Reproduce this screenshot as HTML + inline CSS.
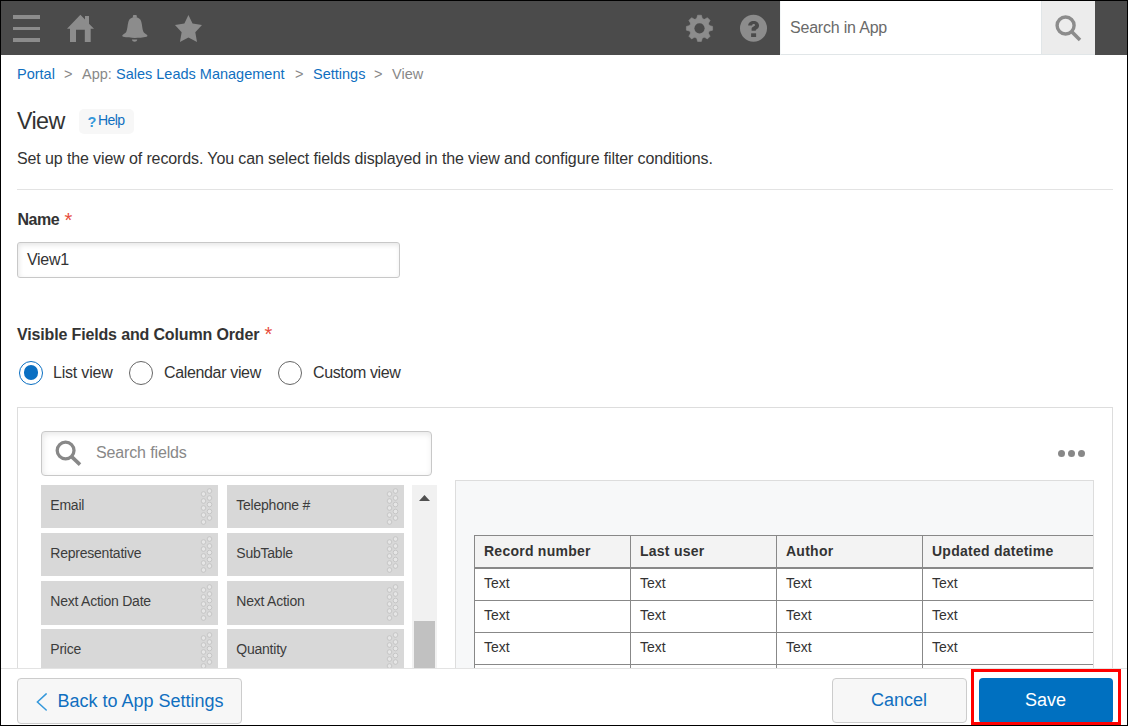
<!DOCTYPE html>
<html><head><meta charset="utf-8">
<style>
*{box-sizing:border-box;margin:0;padding:0}
html,body{width:1128px;height:726px;overflow:hidden;background:#fff;font-family:"Liberation Sans",sans-serif;color:#333}
.frame{position:absolute;left:0;top:0;width:1128px;height:726px;border:1px solid #000;pointer-events:none;z-index:100}
.abs{position:absolute}
.hdr{position:absolute;left:0;top:0;width:1128px;height:55px;background:#4b4b4b}
.t{position:absolute;white-space:nowrap;line-height:1}
.link{color:#106fc0}
.tile{position:absolute;width:177px;height:43px;background:#d8d8d8;overflow:hidden}
.tile span{position:absolute;left:9.3px;top:12.7px;font-size:14px;letter-spacing:-0.23px;color:#3c3c3c;white-space:nowrap;line-height:1}
.pv th,.pv td{border:1px solid #888;text-align:left;font-size:14px;padding:0 9px;height:32px;line-height:1;white-space:nowrap}
.pv tr.r1 td{height:33px}
.pv th{background:#f3f3f3;font-weight:bold;color:#333;border-bottom:2px solid #888;height:32px;letter-spacing:0.25px;padding-bottom:1px}
.pv td{color:#333;font-weight:normal;padding-bottom:3px}
</style></head><body>
<div class="hdr"></div>
<!-- hamburger -->
<div class="abs" style="left:13px;top:15px;width:27px;height:3.6px;background:#8c8c8c"></div>
<div class="abs" style="left:13px;top:26.8px;width:27px;height:3.6px;background:#8c8c8c"></div>
<div class="abs" style="left:13px;top:38.2px;width:27px;height:3.6px;background:#8c8c8c"></div>
<!-- home -->
<svg class="abs" style="left:0;top:0" width="1128" height="55">
 <g fill="#8c8c8c">
  <path d="M67 28.8 L80.4 14.8 L85 19.6 L85 16 L89 16 L89 23.8 L94 28.8 L90.7 28.8 L90.7 42 L84.8 42 L84.8 29.7 L76 29.7 L76 42 L70 42 L70 28.8 Z"/>
  <!-- bell -->
  <g transform="translate(117 10)">
  <path d="M15.9 7.8 L15.9 6 Q15.9 5 16.9 5 L18.8 5 Q19.8 5 19.8 6 L19.8 7.8 Z"/>
  <path d="M17.85 7.3 C21.5 7.3 23.6 9.0 24.3 11.8 C25.3 15.5 25.2 19.5 26.5 22 C27.5 23.5 29.5 24.2 30.3 25.3 C30.6 26 30.2 26.6 29.5 26.8 C26 27.7 21.5 27.9 17.85 27.9 C14.2 27.9 9.7 27.7 6.2 26.8 C5.5 26.6 5.1 26 5.4 25.3 C6.2 24.2 8.2 23.5 9.2 22 C10.5 19.5 10.4 15.5 11.4 11.8 C12.1 9 14.2 7.3 17.85 7.3 Z"/>
  <path d="M14.9 29.6 L20.3 29.6 C20 31 19 31.8 17.6 31.8 C16.2 31.8 15.2 31 14.9 29.6 Z"/>
  </g>
  <!-- star -->
  <path d="M188.44 14.96 L192.56 23.39 L201.98 25.12 L195.29 32.31 L197.02 41.98 L188.44 37.5 L179.92 41.98 L181.65 32.31 L174.96 25.12 L184.38 23.39 Z"/>
 </g>
</svg>
<!-- gear -->
<svg class="abs" style="left:685px;top:14px" width="29" height="29" viewBox="0 0 29 29">
 <g fill="#8c8c8c" stroke="#8c8c8c" stroke-width="0.6" stroke-linejoin="round" transform="translate(14.5 14.3)">
  <circle r="10.1"/>
  <path d="M-3 -9 L-1.9 -13.1 L1.9 -13.1 L3 -9 Z" transform="rotate(0)"/><path d="M-3 -9 L-1.9 -13.1 L1.9 -13.1 L3 -9 Z" transform="rotate(45)"/><path d="M-3 -9 L-1.9 -13.1 L1.9 -13.1 L3 -9 Z" transform="rotate(90)"/><path d="M-3 -9 L-1.9 -13.1 L1.9 -13.1 L3 -9 Z" transform="rotate(135)"/><path d="M-3 -9 L-1.9 -13.1 L1.9 -13.1 L3 -9 Z" transform="rotate(180)"/><path d="M-3 -9 L-1.9 -13.1 L1.9 -13.1 L3 -9 Z" transform="rotate(225)"/><path d="M-3 -9 L-1.9 -13.1 L1.9 -13.1 L3 -9 Z" transform="rotate(270)"/><path d="M-3 -9 L-1.9 -13.1 L1.9 -13.1 L3 -9 Z" transform="rotate(315)"/>
 </g>
 <circle cx="14.5" cy="14.3" r="5.1" fill="#4b4b4b"/>
</svg>
<!-- help circle -->
<svg class="abs" style="left:736px;top:11px" width="36" height="36" viewBox="0 0 36 36">
 <circle cx="17.5" cy="17.25" r="13.5" fill="#8c8c8c"/>
 <path fill="#4b4b4b" d="M12.15 14.6 C12.15 11.6 14.6 9.9 17.6 9.9 C20.7 9.9 23.05 11.8 23.05 14.6 C23.05 17.0 21.5 18.0 19.8 18.9 L19.8 19.8 L15.6 19.8 L15.6 17.8 C15.6 16.5 16.4 15.9 17.6 15.4 C18.7 14.9 19.1 14.6 19.1 14.1 C19.1 13.4 18.5 13 17.6 13 C16.7 13 16.1 13.6 16.1 14.6 Z"/>
 <rect x="15.1" y="22.3" width="5" height="3.7" fill="#4b4b4b"/>
</svg>
<!-- header search -->
<div class="abs" style="left:780px;top:1px;width:261px;height:54px;background:#fff;border-bottom:1px solid #e1e6e8;border-left:1px solid #f3f6f7"></div>
<div class="t" style="left:790px;top:20px;font-size:16px;letter-spacing:-0.2px;color:#6a6a6a">Search in App</div>
<div class="abs" style="left:1041px;top:1px;width:54px;height:54px;background:#ececec;border-bottom:1px solid #e1e6e8;border-left:1px solid #e1e6e8"></div>
<svg class="abs" style="left:1041px;top:1px" width="54" height="54">
 <circle cx="24.6" cy="24.5" r="8.5" fill="none" stroke="#8c8c8c" stroke-width="3.4"/>
 <line x1="30.8" y1="30.8" x2="39" y2="39" stroke="#8c8c8c" stroke-width="3.6"/>
</svg>

<!-- breadcrumb -->
<div class="t link" style="left:17px;top:67px;font-size:14.5px">Portal</div>
<div class="t" style="left:64px;top:67px;font-size:14.5px;color:#888">&gt;</div>
<div class="t" style="left:82px;top:67px;font-size:14.5px;color:#888">App:</div>
<div class="t link" style="left:116px;top:67px;font-size:14.5px">Sales Leads Management</div>
<div class="t" style="left:295px;top:67px;font-size:14.5px;color:#888">&gt;</div>
<div class="t link" style="left:313px;top:67px;font-size:14.5px">Settings</div>
<div class="t" style="left:374px;top:67px;font-size:14.5px;color:#888">&gt;</div>
<div class="t" style="left:392px;top:67px;font-size:14.5px;color:#888">View</div>
<!-- title -->
<div class="t" style="left:17px;top:110px;font-size:23.3px;letter-spacing:-0.6px;color:#333">View</div>
<div class="abs" style="left:79px;top:109px;width:55px;height:25px;background:#f7f7f7;border-radius:5px"></div>
<div class="t" style="left:87.5px;top:115px;font-size:14.5px;font-weight:bold;color:#3498db">?</div>
<div class="t" style="left:98px;top:113px;font-size:14px;letter-spacing:-0.55px;color:#106fc0">Help</div>

<div class="t" style="left:17px;top:151px;font-size:16px;letter-spacing:-0.117px;color:#333">Set up the view of records. You can select fields displayed in the view and configure filter conditions.</div>
<div class="abs" style="left:17px;top:189px;width:1096px;height:1px;background:#e3e3e3"></div>

<div class="t" style="left:17.5px;top:212px;font-size:16px;letter-spacing:-0.45px;font-weight:bold;color:#333">Name</div>
<div class="t" style="left:64.5px;top:210px;font-size:20px;color:#e74c3c">*</div>
<div class="abs" style="left:17px;top:242px;width:383px;height:36px;border:1px solid #c8c8c8;border-radius:3px;box-shadow:inset 1px 2px 5px rgba(0,0,0,.10)"></div>
<div class="t" style="left:27px;top:251.5px;font-size:16px;letter-spacing:-0.3px;color:#333">View1</div>

<div class="t" style="left:17px;top:327px;font-size:16px;letter-spacing:-0.15px;font-weight:bold;color:#333">Visible Fields and Column Order</div>
<div class="t" style="left:264.5px;top:324px;font-size:20px;color:#e74c3c">*</div>

<!-- radios -->
<div class="abs" style="left:19px;top:360.5px;width:24px;height:24px;border:1.7px solid #0a6fc2;border-radius:50%"></div>
<div class="abs" style="left:23.8px;top:365.2px;width:14.5px;height:14.5px;background:#0a6fc2;border-radius:50%"></div>
<div class="t" style="left:53px;top:364.5px;font-size:16px;letter-spacing:-0.2px;color:#333">List view</div>
<div class="abs" style="left:129px;top:360.5px;width:24px;height:24px;border:1px solid #666;border-radius:50%"></div>
<div class="t" style="left:164px;top:364.5px;font-size:16px;letter-spacing:-0.35px;color:#333">Calendar view</div>
<div class="abs" style="left:278px;top:360.5px;width:24px;height:24px;border:1px solid #666;border-radius:50%"></div>
<div class="t" style="left:313px;top:364.5px;font-size:16px;letter-spacing:-0.37px;color:#333">Custom view</div>

<!-- panel -->
<div class="abs" style="left:17px;top:407px;width:1096px;height:330px;border:1px solid #ddd"></div>
<!-- field search -->
<div class="abs" style="left:41px;top:431px;width:391px;height:45px;border:1px solid #c8c8c8;border-radius:4px;box-shadow:inset 1px 2px 6px rgba(0,0,0,.10)"></div>
<svg class="abs" style="left:41px;top:431px" width="60" height="45">
 <circle cx="24.6" cy="19.5" r="8.4" fill="none" stroke="#888" stroke-width="3.3"/>
 <line x1="30.6" y1="25.6" x2="39" y2="33.6" stroke="#888" stroke-width="3.6"/>
</svg>
<div class="t" style="left:96px;top:444.5px;font-size:16px;letter-spacing:-0.14px;color:#888">Search fields</div>
<!-- tiles -->
<div class="tile" style="left:41px;top:485px"><span>Email</span><svg width="177" height="43" style="position:absolute;left:0;top:0"><g fill="#e6e6e6" stroke="#bcbcbc" stroke-width="0.7"><circle cx="162.5" cy="9" r="2.3"/><circle cx="162.5" cy="16" r="2.3"/><circle cx="162.5" cy="23" r="2.3"/><circle cx="162.5" cy="30" r="2.3"/><circle cx="162.5" cy="37" r="2.3"/><circle cx="168.5" cy="6" r="2.3"/><circle cx="168.5" cy="13" r="2.3"/><circle cx="168.5" cy="19.5" r="2.3"/><circle cx="168.5" cy="26.5" r="2.3"/><circle cx="168.5" cy="33" r="2.3"/></g></svg></div>
<div class="tile" style="left:227px;top:485px"><span>Telephone #</span><svg width="177" height="43" style="position:absolute;left:0;top:0"><g fill="#e6e6e6" stroke="#bcbcbc" stroke-width="0.7"><circle cx="162.5" cy="9" r="2.3"/><circle cx="162.5" cy="16" r="2.3"/><circle cx="162.5" cy="23" r="2.3"/><circle cx="162.5" cy="30" r="2.3"/><circle cx="162.5" cy="37" r="2.3"/><circle cx="168.5" cy="6" r="2.3"/><circle cx="168.5" cy="13" r="2.3"/><circle cx="168.5" cy="19.5" r="2.3"/><circle cx="168.5" cy="26.5" r="2.3"/><circle cx="168.5" cy="33" r="2.3"/></g></svg></div>
<div class="tile" style="left:41px;top:533px"><span>Representative</span><svg width="177" height="43" style="position:absolute;left:0;top:0"><g fill="#e6e6e6" stroke="#bcbcbc" stroke-width="0.7"><circle cx="162.5" cy="9" r="2.3"/><circle cx="162.5" cy="16" r="2.3"/><circle cx="162.5" cy="23" r="2.3"/><circle cx="162.5" cy="30" r="2.3"/><circle cx="162.5" cy="37" r="2.3"/><circle cx="168.5" cy="6" r="2.3"/><circle cx="168.5" cy="13" r="2.3"/><circle cx="168.5" cy="19.5" r="2.3"/><circle cx="168.5" cy="26.5" r="2.3"/><circle cx="168.5" cy="33" r="2.3"/></g></svg></div>
<div class="tile" style="left:227px;top:533px"><span>SubTable</span><svg width="177" height="43" style="position:absolute;left:0;top:0"><g fill="#e6e6e6" stroke="#bcbcbc" stroke-width="0.7"><circle cx="162.5" cy="9" r="2.3"/><circle cx="162.5" cy="16" r="2.3"/><circle cx="162.5" cy="23" r="2.3"/><circle cx="162.5" cy="30" r="2.3"/><circle cx="162.5" cy="37" r="2.3"/><circle cx="168.5" cy="6" r="2.3"/><circle cx="168.5" cy="13" r="2.3"/><circle cx="168.5" cy="19.5" r="2.3"/><circle cx="168.5" cy="26.5" r="2.3"/><circle cx="168.5" cy="33" r="2.3"/></g></svg></div>
<div class="tile" style="left:41px;top:581px;height:44px"><span>Next Action Date</span><svg width="177" height="43" style="position:absolute;left:0;top:0"><g fill="#e6e6e6" stroke="#bcbcbc" stroke-width="0.7"><circle cx="162.5" cy="9" r="2.3"/><circle cx="162.5" cy="16" r="2.3"/><circle cx="162.5" cy="23" r="2.3"/><circle cx="162.5" cy="30" r="2.3"/><circle cx="162.5" cy="37" r="2.3"/><circle cx="168.5" cy="6" r="2.3"/><circle cx="168.5" cy="13" r="2.3"/><circle cx="168.5" cy="19.5" r="2.3"/><circle cx="168.5" cy="26.5" r="2.3"/><circle cx="168.5" cy="33" r="2.3"/></g></svg></div>
<div class="tile" style="left:227px;top:581px;height:44px"><span>Next Action</span><svg width="177" height="43" style="position:absolute;left:0;top:0"><g fill="#e6e6e6" stroke="#bcbcbc" stroke-width="0.7"><circle cx="162.5" cy="9" r="2.3"/><circle cx="162.5" cy="16" r="2.3"/><circle cx="162.5" cy="23" r="2.3"/><circle cx="162.5" cy="30" r="2.3"/><circle cx="162.5" cy="37" r="2.3"/><circle cx="168.5" cy="6" r="2.3"/><circle cx="168.5" cy="13" r="2.3"/><circle cx="168.5" cy="19.5" r="2.3"/><circle cx="168.5" cy="26.5" r="2.3"/><circle cx="168.5" cy="33" r="2.3"/></g></svg></div>
<div class="tile" style="left:41px;top:629px"><span>Price</span><svg width="177" height="43" style="position:absolute;left:0;top:0"><g fill="#e6e6e6" stroke="#bcbcbc" stroke-width="0.7"><circle cx="162.5" cy="9" r="2.3"/><circle cx="162.5" cy="16" r="2.3"/><circle cx="162.5" cy="23" r="2.3"/><circle cx="162.5" cy="30" r="2.3"/><circle cx="162.5" cy="37" r="2.3"/><circle cx="168.5" cy="6" r="2.3"/><circle cx="168.5" cy="13" r="2.3"/><circle cx="168.5" cy="19.5" r="2.3"/><circle cx="168.5" cy="26.5" r="2.3"/><circle cx="168.5" cy="33" r="2.3"/></g></svg></div>
<div class="tile" style="left:227px;top:629px"><span>Quantity</span><svg width="177" height="43" style="position:absolute;left:0;top:0"><g fill="#e6e6e6" stroke="#bcbcbc" stroke-width="0.7"><circle cx="162.5" cy="9" r="2.3"/><circle cx="162.5" cy="16" r="2.3"/><circle cx="162.5" cy="23" r="2.3"/><circle cx="162.5" cy="30" r="2.3"/><circle cx="162.5" cy="37" r="2.3"/><circle cx="168.5" cy="6" r="2.3"/><circle cx="168.5" cy="13" r="2.3"/><circle cx="168.5" cy="19.5" r="2.3"/><circle cx="168.5" cy="26.5" r="2.3"/><circle cx="168.5" cy="33" r="2.3"/></g></svg></div>

<!-- scrollbar -->
<div class="abs" style="left:412px;top:485px;width:25px;height:190px;background:#f1f1f1"></div>
<svg class="abs" style="left:412px;top:485px" width="25" height="30"><path d="M7 16 L12.5 10 L18 16 Z" fill="#505050"/></svg>
<div class="abs" style="left:414px;top:621px;width:21px;height:60px;background:#c1c1c1"></div>
<!-- dots -->
<div class="abs" style="left:1058px;top:450px;width:7px;height:7px;border-radius:50%;background:#888"></div>
<div class="abs" style="left:1068px;top:450px;width:7px;height:7px;border-radius:50%;background:#888"></div>
<div class="abs" style="left:1078px;top:450px;width:7px;height:7px;border-radius:50%;background:#888"></div>
<!-- preview -->
<div class="abs" style="left:455px;top:480px;width:639px;height:260px;background:#f7f8f9;border:1px solid #ddd;overflow:hidden">
 <table class="pv" style="position:absolute;left:18px;top:54px;border-collapse:collapse;background:#fff;table-layout:fixed;width:700px">
  <tr class="h"><th style="width:156px">Record number</th><th style="width:146px">Last user</th><th style="width:146px">Author</th><th style="width:252px">Updated datetime</th></tr>
  <tr class="r1"><td>Text</td><td>Text</td><td>Text</td><td>Text</td></tr>
  <tr><td>Text</td><td>Text</td><td>Text</td><td>Text</td></tr>
  <tr><td>Text</td><td>Text</td><td>Text</td><td>Text</td></tr>
  <tr><td>Text</td><td>Text</td><td>Text</td><td>Text</td></tr>
 </table>
</div>
<!-- footer -->
<div class="abs" style="left:0;top:668px;width:1128px;height:58px;background:#fff;border-top:1px solid #e3e3e3"></div>
<div class="abs" style="left:17px;top:678px;width:225px;height:46px;background:#f7f7f7;border:1px solid #ccc;border-radius:4px"></div>
<svg class="abs" style="left:30px;top:688px" width="24" height="28"><path d="M16.2 5.9 L7.4 14 L16.2 22" fill="none" stroke="#3498db" stroke-width="1.5" stroke-linecap="round" stroke-linejoin="miter"/></svg>
<div class="t" style="left:57.5px;top:692px;font-size:18px;color:#106fc0">Back to App Settings</div>
<div class="abs" style="left:832px;top:678px;width:135px;height:45px;background:#f7f7f7;border:1px solid #ccc;border-radius:4px"></div>
<div class="t" style="left:871px;top:691px;font-size:18px;color:#106fc0">Cancel</div>
<div class="abs" style="left:979px;top:678px;width:134px;height:45px;background:#0070c0;border-radius:4px"></div>
<div class="t" style="left:1025px;top:691px;font-size:18px;color:#fff">Save</div>
<div class="abs" style="left:971px;top:669px;width:150px;height:56px;border:3px solid #ff0000"></div>
<div class="frame"></div>

</body></html>
